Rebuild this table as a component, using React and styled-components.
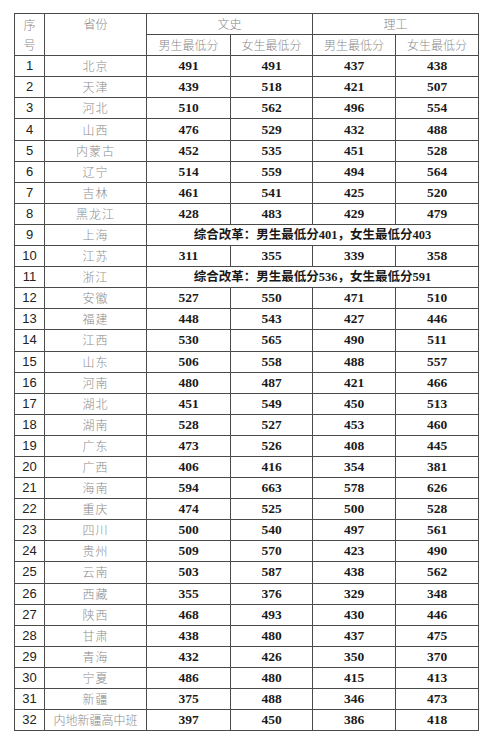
import * as React from "react";
import styled, { createGlobalStyle } from "styled-components";

const GlobalStyle = createGlobalStyle`
  html, body {
    margin: 0;
    padding: 0;
    background: #ffffff;
  }
`;

const Page = styled.div`
  width: 500px;
  height: 751px;
  padding: 13px 0 0 14px;
  box-sizing: border-box;
  background: #fff;
`;

const Table = styled.table`
  border-collapse: collapse;
  table-layout: fixed;
  width: 465px;
  border: 1px solid #4a4a4a;
`;

const Row = styled.tr`
  height: 21.1px;
`;

const Cell = styled.td`
  border: 1px solid #4a4a4a;
  padding: 0;
  text-align: center;
  vertical-align: ${(p) => (p.$top ? "top" : "middle")};
  line-height: 20px;
  white-space: nowrap;
  overflow: hidden;
`;

const HeadCell = styled(Cell)`
  font-family: "Noto Sans CJK SC", sans-serif;
  font-size: 12px;
  font-weight: 300;
  color: #8a8a8a;
`;

const SeqCell = styled(Cell)`
  font-family: "Liberation Sans", Arial, sans-serif;
  font-size: 13px;
  color: #222;
`;

const ProvCell = styled(Cell)`
  font-family: "Noto Sans CJK SC", sans-serif;
  font-size: 12px;
  font-weight: 300;
  color: #8c8c8c;
  letter-spacing: ${(p) => (p.$long ? "0" : "1px")};
`;

const ScoreCell = styled(Cell)`
  font-family: "Liberation Serif", "Times New Roman", serif;
  font-weight: bold;
  font-size: 13.5px;
  color: #1a1a1a;
`;

const NoteCell = styled(Cell)`
  font-family: "Liberation Serif", "Noto Sans CJK SC", serif;
  font-weight: bold;
  font-size: 12.5px;
  color: #1a1a1a;
`;

const rows = [
  ["北京", 491, 491, 437, 438],
  ["天津", 439, 518, 421, 507],
  ["河北", 510, 562, 496, 554],
  ["山西", 476, 529, 432, 488],
  ["内蒙古", 452, 535, 451, 528],
  ["辽宁", 514, 559, 494, 564],
  ["吉林", 461, 541, 425, 520],
  ["黑龙江", 428, 483, 429, 479],
  ["上海", "综合改革：男生最低分401，女生最低分403"],
  ["江苏", 311, 355, 339, 358],
  ["浙江", "综合改革：男生最低分536，女生最低分591"],
  ["安徽", 527, 550, 471, 510],
  ["福建", 448, 543, 427, 446],
  ["江西", 530, 565, 490, 511],
  ["山东", 506, 558, 488, 557],
  ["河南", 480, 487, 421, 466],
  ["湖北", 451, 549, 450, 513],
  ["湖南", 528, 527, 453, 460],
  ["广东", 473, 526, 408, 445],
  ["广西", 406, 416, 354, 381],
  ["海南", 594, 663, 578, 626],
  ["重庆", 474, 525, 500, 528],
  ["四川", 500, 540, 497, 561],
  ["贵州", 509, 570, 423, 490],
  ["云南", 503, 587, 438, 562],
  ["西藏", 355, 376, 329, 348],
  ["陕西", 468, 493, 430, 446],
  ["甘肃", 438, 480, 437, 475],
  ["青海", 432, 426, 350, 370],
  ["宁夏", 486, 480, 415, 413],
  ["新疆", 375, 488, 346, 473],
  ["内地新疆高中班", 397, 450, 386, 418],
];

const widths = [30, 102, 84, 82, 83, 83];

const App = () => (
  <Page>
    <GlobalStyle />
    <Table>
      <colgroup>
        {widths.map((w, i) => (
          <col key={i} style={{ width: w }} />
        ))}
      </colgroup>
      <thead>
        <Row>
          <HeadCell rowSpan={2}>
            序
            <br />号
          </HeadCell>
          <HeadCell rowSpan={2} $top>
            省份
          </HeadCell>
          <HeadCell colSpan={2}>文史</HeadCell>
          <HeadCell colSpan={2}>理工</HeadCell>
        </Row>
        <Row>
          <HeadCell>男生最低分</HeadCell>
          <HeadCell>女生最低分</HeadCell>
          <HeadCell>男生最低分</HeadCell>
          <HeadCell>女生最低分</HeadCell>
        </Row>
      </thead>
      <tbody>
        {rows.map(([prov, ...vals], i) => (
          <Row key={prov}>
            <SeqCell>{i + 1}</SeqCell>
            <ProvCell $long={prov.length > 3}>{prov}</ProvCell>
            {vals.length === 1 ? (
              <NoteCell colSpan={4}>{vals[0]}</NoteCell>
            ) : (
              vals.map((v, j) => <ScoreCell key={j}>{v}</ScoreCell>)
            )}
          </Row>
        ))}
      </tbody>
    </Table>
  </Page>
);

export default App;
